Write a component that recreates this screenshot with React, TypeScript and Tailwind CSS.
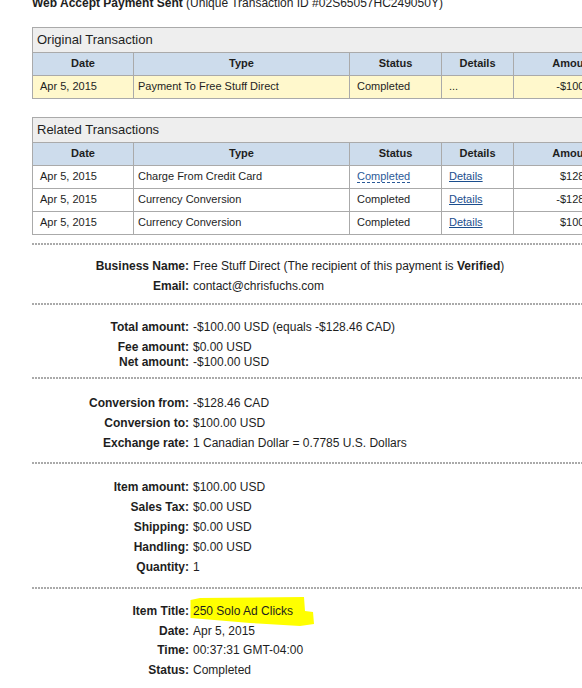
import React from "react";

const Dotted = ({ className = "" }: { className?: string }) => (
  <div
    className={
      "ml-[32px] h-[2px] bg-[repeating-linear-gradient(90deg,#aaaaaa_0px,#aaaaaa_2px,transparent_2px,transparent_3px)] " +
      className
    }
  />
);

const Row = ({
  label,
  children,
  h = "h-[20px]",
}: {
  label: string;
  children: React.ReactNode;
  h?: string;
}) => (
  <div className={"flex leading-[20px] " + h}>
    <div className="w-[157px] shrink-0 text-right font-bold">{label}</div>
    <div className="pl-[4px] whitespace-nowrap">{children}</div>
  </div>
);

type TxRow = {
  date: string;
  type: string;
  status: React.ReactNode;
  details: React.ReactNode;
  amount: string;
};

const Table = ({
  title,
  rows,
  rowBg = "",
}: {
  title: string;
  rows: TxRow[];
  rowBg?: string;
}) => (
  <div className="ml-[32px] w-[601px] border-l border-t border-[#aaaaaa] text-[11px]">
    <div className="h-[25px] border-b border-r border-[#aaaaaa] bg-[#eeeeee] pl-[4px] text-[13px] leading-[24px]">
      {title}
    </div>
    <div className="flex h-[23px] border-b border-[#aaaaaa] bg-[#cddcec] font-bold leading-[20px] text-center">
      <div className="w-[101px] border-r border-[#aaaaaa]">Date</div>
      <div className="w-[216px] border-r border-[#aaaaaa]">Type</div>
      <div className="w-[92px] border-r border-[#aaaaaa]">Status</div>
      <div className="w-[72px] border-r border-[#aaaaaa]">Details</div>
      <div className="w-[119px] border-r border-[#aaaaaa]">Amount</div>
    </div>
    {rows.map((r, i) => (
      <div
        key={i}
        className={"flex h-[23px] border-b border-[#aaaaaa] leading-[20px] whitespace-nowrap " + rowBg}
      >
        <div className="w-[101px] border-r border-[#aaaaaa] pl-[7px]">{r.date}</div>
        <div className="w-[216px] border-r border-[#aaaaaa] pl-[4px]">{r.type}</div>
        <div className="w-[92px] border-r border-[#aaaaaa] pl-[7px]">{r.status}</div>
        <div className="w-[72px] border-r border-[#aaaaaa] pl-[7px]">{r.details}</div>
        <div className="w-[119px] border-r border-[#aaaaaa] pr-[6px] text-right">{r.amount}</div>
      </div>
    ))}
  </div>
);

const DetailsLink = () => <span className="text-[#1b4e8e] underline">Details</span>;

export default function App() {
  return (
    <div className="h-[688px] w-[582px] overflow-hidden bg-white text-[12px] text-[#1e1e1e] font-['Liberation_Sans',Arial,sans-serif]">
      <div className="-mt-[5px] h-[16px] pl-[32px] leading-[16px] whitespace-nowrap">
        <span className="font-bold">Web Accept Payment Sent</span> (Unique Transaction ID
        #02S65057HC249050Y)
      </div>

      <div className="mt-[16px]">
        <Table
          title="Original Transaction"
          rowBg="bg-[#fff8cc]"
          rows={[
            {
              date: "Apr 5, 2015",
              type: "Payment To Free Stuff Direct",
              status: "Completed",
              details: "...",
              amount: "-$100.00 USD",
            },
          ]}
        />
      </div>

      <div className="mt-[18px]">
        <Table
          title="Related Transactions"
          rows={[
            {
              date: "Apr 5, 2015",
              type: "Charge From Credit Card",
              status: (
                <span className="border-b border-dashed border-[#2b5a98] text-[#2b5a98]">Completed</span>
              ),
              details: <DetailsLink />,
              amount: "$128.46 CAD",
            },
            {
              date: "Apr 5, 2015",
              type: "Currency Conversion",
              status: "Completed",
              details: <DetailsLink />,
              amount: "-$128.46 CAD",
            },
            {
              date: "Apr 5, 2015",
              type: "Currency Conversion",
              status: "Completed",
              details: <DetailsLink />,
              amount: "$100.00 USD",
            },
          ]}
        />
      </div>

      <Dotted className="mt-[8px]" />
      <div className="pl-[32px] pt-[11px] pb-[7px]">
        <Row label="Business Name:">
          Free Stuff Direct (The recipient of this payment is <span className="font-bold">Verified</span>)
        </Row>
        <Row label="Email:">contact@chrisfuchs.com</Row>
      </div>

      <Dotted />
      <div className="pl-[32px] pt-[12px] pb-[5px]">
        <Row label="Total amount:" h="h-[20px]">-$100.00 USD (equals -$128.46 CAD)</Row>
        <Row label="Fee amount:" h="h-[15px]">$0.00 USD</Row>
        <Row label="Net amount:">-$100.00 USD</Row>
      </div>

      <Dotted />
      <div className="pl-[32px] pt-[14px] pb-[9px]">
        <Row label="Conversion from:">-$128.46 CAD</Row>
        <Row label="Conversion to:">$100.00 USD</Row>
        <Row label="Exchange rate:">1 Canadian Dollar = 0.7785 U.S. Dollars</Row>
      </div>

      <Dotted />
      <div className="pl-[32px] pt-[13px] pb-[10px]">
        <Row label="Item amount:">$100.00 USD</Row>
        <Row label="Sales Tax:">$0.00 USD</Row>
        <Row label="Shipping:">$0.00 USD</Row>
        <Row label="Handling:">$0.00 USD</Row>
        <Row label="Quantity:">1</Row>
      </div>

      <Dotted />
      <div className="pl-[32px] pt-[12px]">
        <Row label="Item Title:">
          <span className="relative inline-block">
            <svg
              className="absolute left-[-5px] top-[-6px] h-[34px] w-[130px]"
              viewBox="0 0 130 34"
            >
              <polygon
                points="2.5,5 12,3 116,2 117,16 125,17 126,29 112,31 62,28 2.5,23"
                fill="#ffff00"
              />
            </svg>
            <span className="relative">250 Solo Ad Clicks</span>
          </span>
        </Row>
        <Row label="Date:" h="h-[19px]">Apr 5, 2015</Row>
        <Row label="Time:">00:37:31 GMT-04:00</Row>
        <Row label="Status:">Completed</Row>
      </div>
    </div>
  );
}
